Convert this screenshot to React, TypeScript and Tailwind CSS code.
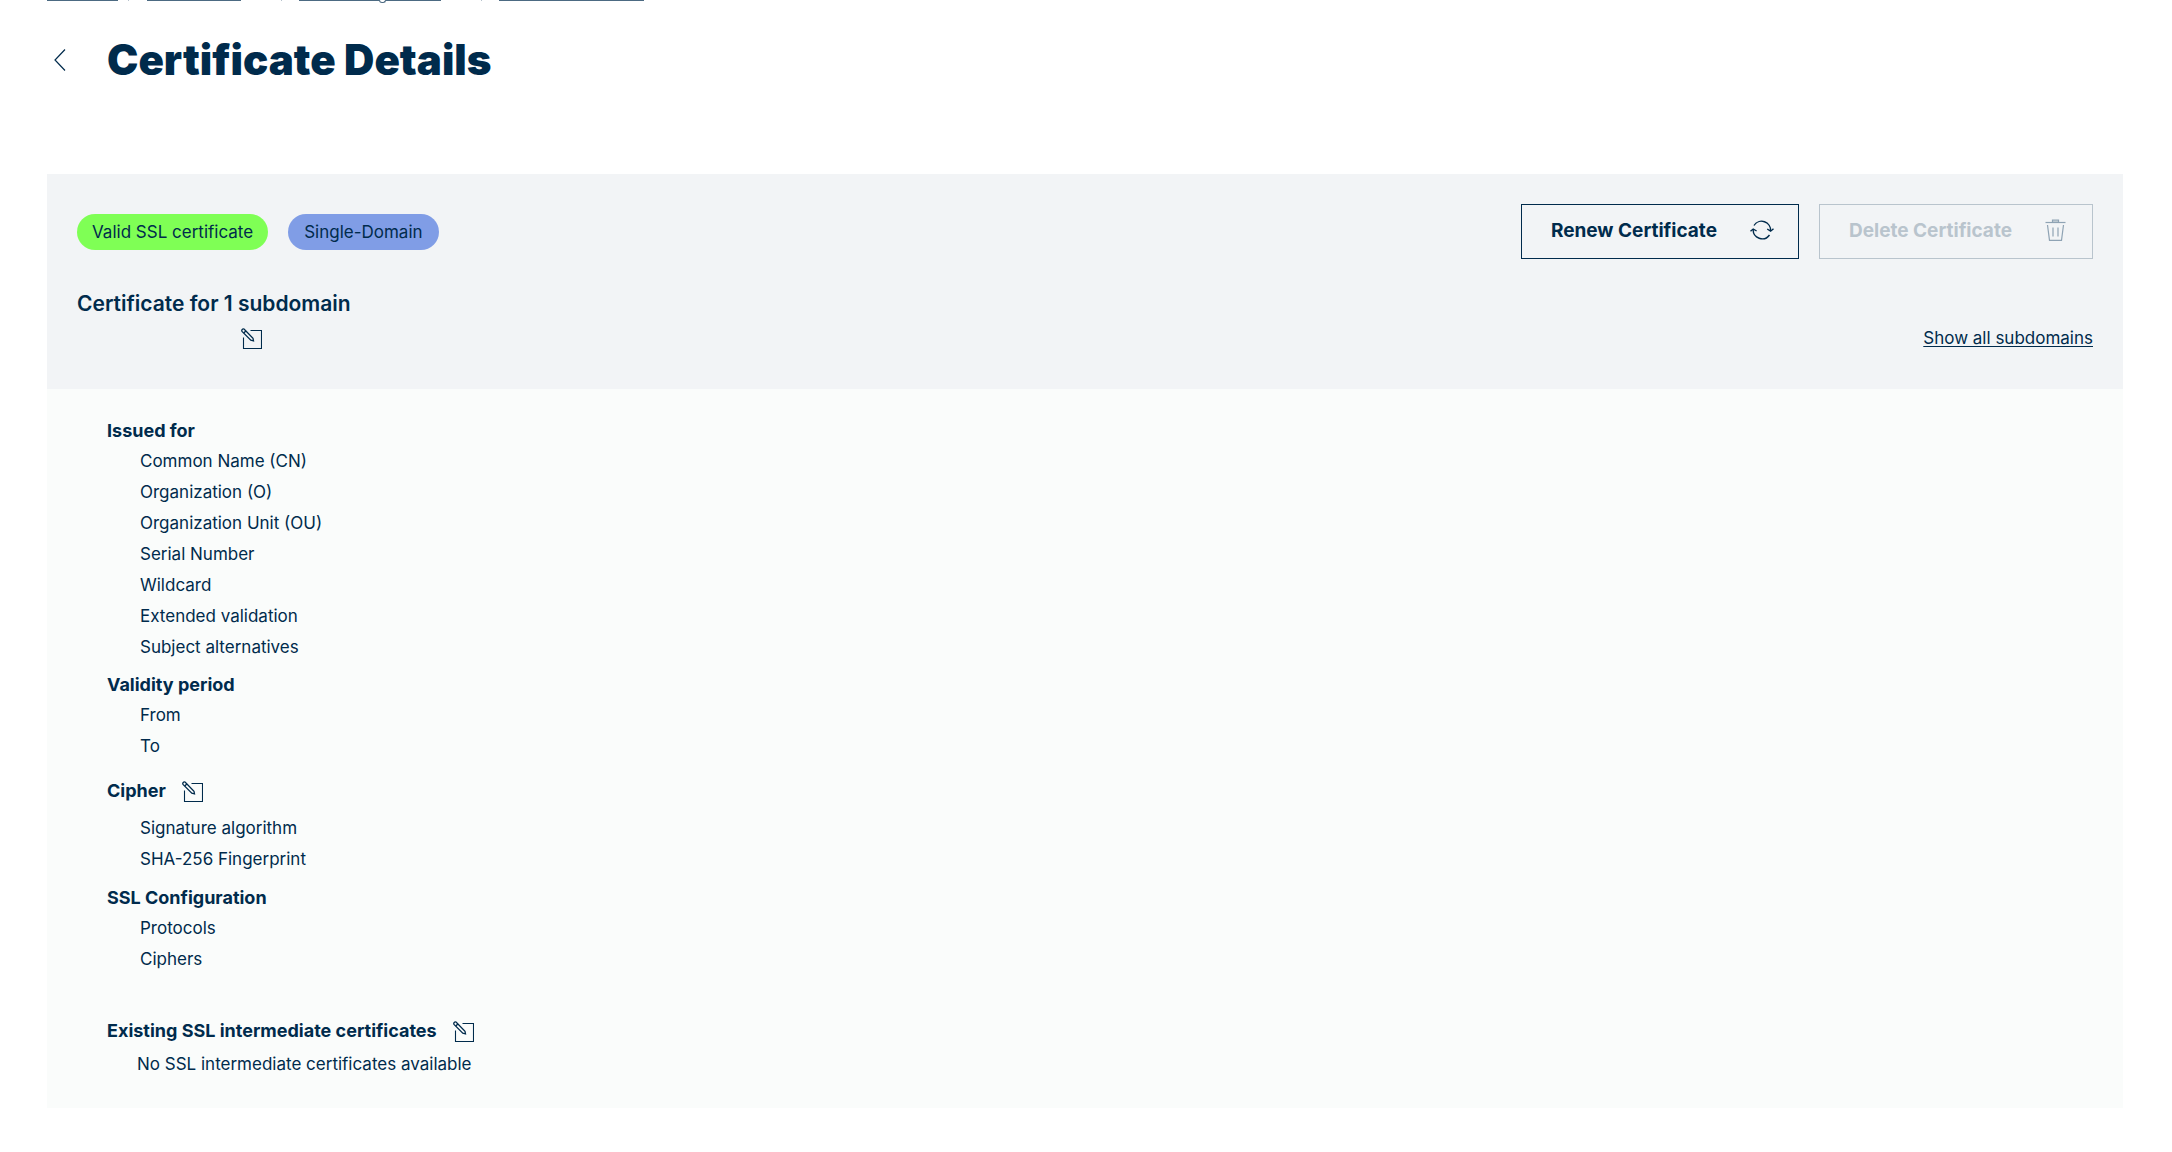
import type { ReactNode } from "react";

type IconProps = {
  className?: string;
};

const EditIcon = ({ className }: IconProps) => (
  <svg viewBox="0 0 21 21" fill="none" stroke="currentColor" className={className} aria-hidden="true">
    <path d="M9.5 2.5H20.5V20.5H2.5V9.5" strokeWidth="1.1" />
    <path d="M1 1.7L1.8 1Q2.4 0.6 3 1.1L12 10.2L12.5 12.8L9.8 12.2L1 3.4Q0.5 2.6 1 1.7Z" strokeWidth="1.3" />
    <path d="M5 2.8L2.8 5" strokeWidth="1.3" />
  </svg>
);

const RefreshIcon = ({ className }: IconProps) => (
  <svg viewBox="0 0 24 20" fill="none" stroke="currentColor" strokeWidth="1.4" className={className} aria-hidden="true">
    <path d="M4 5.5A9 9 0 0 1 20.6 11" />
    <path d="M17.2 9L20.6 11.2L23.5 8.7" />
    <path d="M19.5 15A9 9 0 0 1 3.2 9.2" />
    <path d="M0.5 11.3L3.2 9L6.6 11" />
  </svg>
);

const TrashIcon = ({ className }: IconProps) => (
  <svg viewBox="0 0 21 22" fill="none" stroke="currentColor" strokeWidth="1.2" className={className} aria-hidden="true">
    <path d="M0.5 3.5H20.5" />
    <path d="M7.5 3.5V1H13.5V3.5" fill="currentColor" fillOpacity="0.5" />
    <path d="M2.5 6L4.5 21.3H16.5L18.5 6" />
    <path d="M8 8.5V17.5M13 8.5V17.5" />
  </svg>
);

const BackIcon = ({ className }: IconProps) => (
  <svg viewBox="0 0 12 22" fill="none" stroke="currentColor" strokeWidth="1.2" className={className} aria-hidden="true">
    <path d="M11 0.5L1 11L11 21.5" />
  </svg>
);

type SectionProps = {
  title: string;
  editable?: boolean;
  className?: string;
  children: ReactNode;
};

const Section = ({ title, editable, className, children }: SectionProps) => (
  <section className={className}>
    <div className={editable ? "flex h-9 items-center gap-4" : "flex h-[31px] items-center"}>
      <h2 className="text-[18px] font-bold leading-7">{title}</h2>
      {editable && (
        <button type="button" aria-label={`Edit ${title}`}>
          <EditIcon className="size-[21px]" />
        </button>
      )}
    </div>
    {children}
  </section>
);

const Fields = ({ items, className }: { items: string[]; className?: string }) => (
  <ul className={className}>
    {items.map((item) => (
      <li key={item} className="pl-[33px] leading-[31px]">
        {item}
      </li>
    ))}
  </ul>
);

const Breadcrumbs = () => (
  <div className="flex h-[3px] items-start text-[#4c6a82]" aria-hidden="true">
    <span className="h-px w-[71px] bg-current" />
    <span className="ml-[10px] h-px w-px bg-current opacity-40" />
    <span className="ml-[18px] h-px w-[94px] bg-current" />
    <span className="ml-10 h-px w-px bg-current opacity-40" />
    <span className="ml-[17px] h-px w-20 bg-current" />
    <span className="h-[3px] w-[7px] rounded-b-full border-x border-b border-current" />
    <span className="h-px w-[55px] bg-current" />
    <span className="ml-10 h-px w-px bg-current opacity-40" />
    <span className="ml-[17px] h-px w-[145px] bg-current" />
  </div>
);

export default function App() {
  return (
    <main className="min-h-screen bg-white pl-[47px] pr-[49px] pb-11 font-[Inter,sans-serif] text-[17px] text-[#002b4c]">
      <Breadcrumbs />

      <header className="mt-[33px] flex h-12 items-center gap-[41px] pl-[7px]">
        <button type="button" aria-label="Back">
          <BackIcon className="h-[22px] w-3" />
        </button>
        <h1 className="text-[42px] font-black leading-[48px]">Certificate Details</h1>
      </header>

      <div className="mt-[90px] bg-[#f2f4f6] px-[30px] pt-[30px] pb-9">
        <div className="flex items-center justify-between">
          <div className="flex gap-5">
            <span className="rounded-full bg-[#7fff55] px-[15px] leading-9">Valid SSL certificate</span>
            <span className="rounded-full bg-[#809de6] px-4 leading-9">Single-Domain</span>
          </div>
          <div className="flex gap-5">
            <button
              type="button"
              className="flex h-[55px] items-center gap-[33px] border border-[#002b4c] pl-[29px] pr-6 text-[19px] font-bold"
            >
              Renew Certificate
              <RefreshIcon className="mb-1 h-5 w-6" />
            </button>
            <button
              type="button"
              disabled
              className="flex h-[55px] items-center gap-[33px] border border-[#b9c4cd] pl-[29px] pr-[26px] text-[19px] font-bold text-[#b9c4cd]"
            >
              Delete Certificate
              <TrashIcon className="mb-1 h-[22px] w-[21px] text-[#8fa3b4]" />
            </button>
          </div>
        </div>

        <h2 className="mt-[31px] text-[21px] font-semibold leading-7">Certificate for 1 subdomain</h2>
        <div className="mt-1.5 flex h-[29px] items-center justify-between">
          <button type="button" aria-label="Edit subdomain" className="ml-[164px]">
            <EditIcon className="size-[21px]" />
          </button>
          <a href="#" className="underline underline-offset-2">
            Show all subdomains
          </a>
        </div>
      </div>

      <div className="bg-[#fafcfb] px-[60px] pt-[26px] pb-7">
        <Section title="Issued for">
          <Fields
            items={[
              "Common Name (CN)",
              "Organization (O)",
              "Organization Unit (OU)",
              "Serial Number",
              "Wildcard",
              "Extended validation",
              "Subject alternatives",
            ]}
          />
        </Section>
        <Section className="mt-1.5" title="Validity period">
          <Fields items={["From", "To"]} />
        </Section>
        <Section className="mt-[11px]" title="Cipher" editable>
          <Fields className="mt-1" items={["Signature algorithm", "SHA-256 Fingerprint"]} />
        </Section>
        <Section className="mt-[7px]" title="SSL Configuration">
          <Fields items={["Protocols", "Ciphers"]} />
        </Section>
        <Section className="mt-[38px]" title="Existing SSL intermediate certificates" editable>
          <p className="pl-[30px] leading-[31px]">No SSL intermediate certificates available</p>
        </Section>
      </div>
    </main>
  );
}
